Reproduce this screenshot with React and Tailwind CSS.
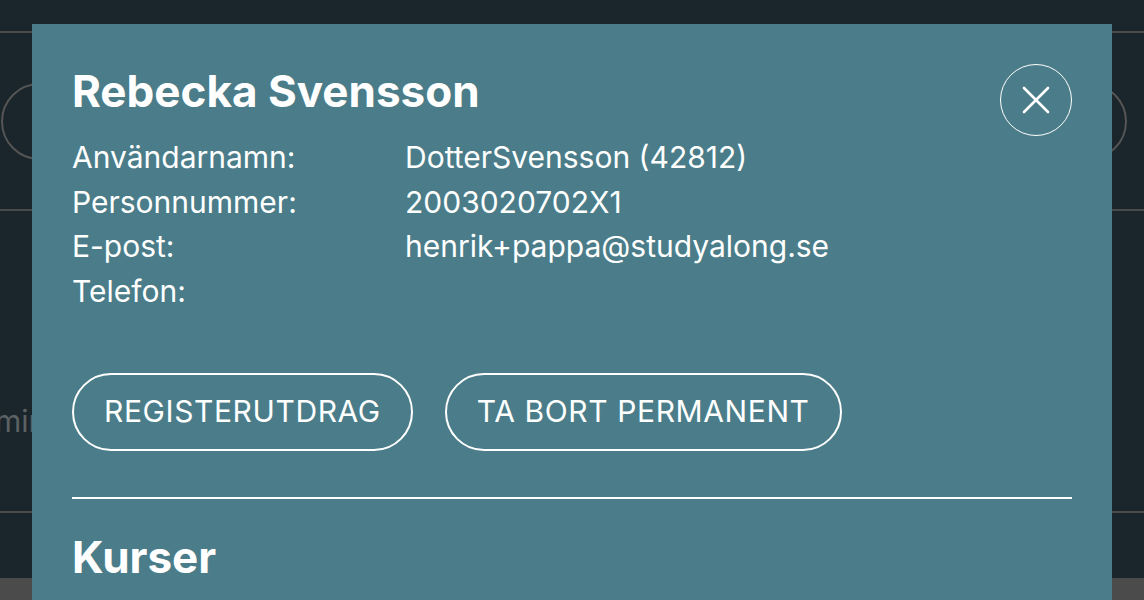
import React from "react";

const font = { fontFamily: "Inter, 'Noto Sans', sans-serif" };

const info = [
  { label: "Användarnamn:", value: "DotterSvensson (42812)" },
  { label: "Personnummer:", value: "2003020702X1" },
  { label: "E-post:", value: "henrik+pappa@studyalong.se" },
  { label: "Telefon:", value: "" },
];

const App = () => {
  return (
    <div className="relative h-[600px] w-full overflow-hidden bg-[#1a262b]" style={font}>
      {/* Background page */}
      <div className="flex h-full flex-col">
        <div className="h-[33px] shrink-0 border-b-2 border-[#4a4a4a]" />
        <div className="flex h-[178px] shrink-0 items-center justify-between border-b-2 border-[#4a4a4a] px-px">
          <div className="h-[77px] w-[77px] rounded-full border-2 border-[#555]" />
          <div className="mr-[16px] h-[77px] w-[77px] rounded-full border-2 border-[#555]" />
        </div>
        <div className="flex h-[302px] shrink-0 items-start border-b-2 border-[#4a4a4a] pt-[188px]">
          <span className="ml-[-44px] text-[30px] leading-[45px] text-[#5c6163]">Admin</span>
        </div>
        <div className="h-[65px] shrink-0" />
        <div className="flex-1 bg-[#4b4b4b]" />
      </div>

      {/* Modal */}
      <div className="absolute left-[32px] right-[32px] top-[24px] bottom-0 bg-[#4a7d89] px-10 pt-10 text-white">
        <div className="flex items-start justify-between">
          <h1 className="-mt-[5px] text-[44px] font-bold leading-[64px]">Rebecka Svensson</h1>
          <button className="flex h-[72px] w-[72px] items-center justify-center rounded-full border-[1.5px] border-white">
            <svg width="28" height="28" viewBox="0 0 28 28" fill="none" stroke="white" strokeWidth="2.6" strokeLinecap="round">
              <path d="M2 2 L26 26 M26 2 L2 26" />
            </svg>
          </button>
        </div>

        <div className="-mt-[1px] grid grid-cols-[333px_1fr] text-[30px] leading-[44.7px]">
          {info.map((row) => (
            <React.Fragment key={row.label}>
              <span>{row.label}</span>
              <span>{row.value}</span>
            </React.Fragment>
          ))}
        </div>

        <div className="mt-[59px] flex gap-8">
          <button className="h-[78px] rounded-full border-2 border-white px-[30px] text-[30px] uppercase tracking-[0.6px]">
            Registerutdrag
          </button>
          <button className="h-[78px] rounded-full border-2 border-white px-[30px] text-[30px] uppercase tracking-[0.6px]">
            Ta bort permanent
          </button>
        </div>

        <div className="mt-[46px] h-[2px] bg-white" />

        <h2 className="mt-[28px] text-[44px] font-bold leading-[60px]">Kurser</h2>
      </div>
    </div>
  );
};

export default App;
